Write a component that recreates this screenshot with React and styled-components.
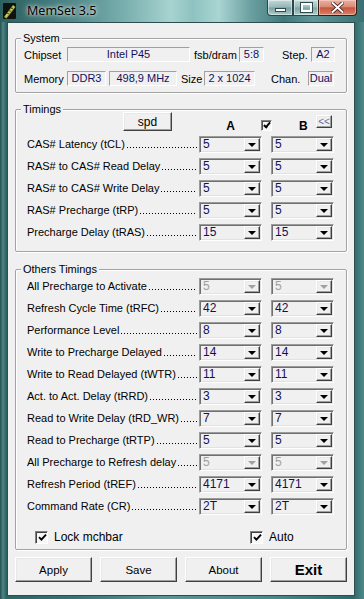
import React from "react";
import styled, { createGlobalStyle } from "styled-components";

const GlobalStyle = createGlobalStyle`
  html, body {
    margin: 0;
    padding: 0;
  }
  body {
    background: #2d6566;
    font-family: "Liberation Sans", Arial, sans-serif;
    font-size: 11px;
    color: #000;
  }
`;

const timings = [
  ["CAS# Latency (tCL)", "5", "5"],
  ["RAS# to CAS# Read Delay", "5", "5"],
  ["RAS# to CAS# Write Delay", "5", "5"],
  ["RAS# Precharge (tRP)", "5", "5"],
  ["Precharge Delay  (tRAS)", "15", "15"],
];

const others = [
  ["All Precharge to Activate", "5", "5", true],
  ["Refresh Cycle Time (tRFC)", "42", "42"],
  ["Performance Level", "8", "8"],
  ["Write to Precharge Delayed", "14", "14"],
  ["Write to Read Delayed (tWTR)", "11", "11"],
  ["Act. to Act. Delay (tRRD)", "3", "3"],
  ["Read to Write Delay (tRD_WR)", "7", "7"],
  ["Read to Precharge (tRTP)", "5", "5"],
  ["All Precharge to Refresh delay", "5", "5", true],
  ["Refresh Period (tREF)", "4171", "4171"],
  ["Command Rate (CR)", "2T", "2T"],
];

function MemSet() {
  return (
    <Window>
      <GlobalStyle />
      <TitleBar>
        <AppIcon width="13" height="16" viewBox="0 0 13 16">
          <rect x="0" y="0" width="13" height="16" rx="1" fill="#111" />
          <path d="M1 14 L10 2 L12.5 4 L3.5 15.5 Z" fill="#9fae3a" />
          <path d="M2.2 13.2 L10.3 3 L11.2 3.8 L3.1 14 Z" fill="#d8dc6a" />
          <circle cx="5" cy="10.5" r="0.8" fill="#2d3a10" />
          <circle cx="7" cy="8" r="0.8" fill="#2d3a10" />
          <circle cx="9" cy="5.4" r="0.8" fill="#2d3a10" />
        </AppIcon>
        <Title>MemSet 3.5</Title>
        <Caption>
          <CapBtn $w={26}>
            <MinGlyph />
          </CapBtn>
          <CapBtn $w={25} $last>
            <MaxGlyph />
          </CapBtn>
          <CloseBtn>
            <svg width="13" height="11" viewBox="0 0 13 11">
              <path
                d="M1.5 1 L11.5 10 M11.5 1 L1.5 10"
                stroke="#3a1a14"
                strokeWidth="3.6"
                strokeLinecap="square"
              />
              <path
                d="M1.5 1 L11.5 10 M11.5 1 L1.5 10"
                stroke="#fff"
                strokeWidth="2"
                strokeLinecap="square"
              />
            </svg>
          </CloseBtn>
        </Caption>
      </TitleBar>

      <Client>
        <Group $mt={15} $pb={6}>
          <Legend>System</Legend>
          <InfoRow $mt={2}>
            <InfoLabel $w={43}>Chipset</InfoLabel>
            <Field $w={123}>Intel P45</Field>
            <InfoLabel $ml={4} $w={45}>fsb/dram</InfoLabel>
            <Field $w={25}>5:8</Field>
            <InfoLabel $ml={18} $w={29}>Step.</InfoLabel>
            <Field $w={24}>A2</Field>
          </InfoRow>
          <InfoRow $mt={9}>
            <InfoLabel $w={43}>Memory</InfoLabel>
            <Field $w={39}>DDR3</Field>
            <Field $ml={3} $w={68}>498,9 MHz</Field>
            <InfoLabel $ml={4} $w={23}>Size</InfoLabel>
            <Field $w={51}>2 x 1024</Field>
            <InfoLabel $ml={16} $w={37}>Chan.</InfoLabel>
            <Field $w={26}>Dual</Field>
          </InfoRow>
        </Group>

        <Group $mt={16} $pb={8}>
          <Legend>Timings</Legend>
          <HeadRow>
            <SpdButton>spd</SpdButton>
            <ColHead>A</ColHead>
            <SmallCheck />
            <ColHead $w={44} $pl={27}>B</ColHead>
            <BackButton>&lt;&lt;</BackButton>
          </HeadRow>
          {timings.map(([name, a, b]) => (
            <TimingRow key={name} name={name} a={a} b={b} />
          ))}
        </Group>

        <Group $mt={17} $pb={2}>
          <Legend>Others Timings</Legend>
          <Rows $mt={-1}>
            {others.map(([name, a, b, off]) => (
              <TimingRow key={name} name={name} a={a} b={b} disabled={off} />
            ))}
          </Rows>
          <CheckRow>
            <CheckItem $w={215}>
              <CheckBox>
                <Tick />
              </CheckBox>
              Lock mchbar
            </CheckItem>
            <CheckItem>
              <CheckBox>
                <Tick />
              </CheckBox>
              Auto
            </CheckItem>
          </CheckRow>
        </Group>

        <ButtonBar>
          <PushButton>Apply</PushButton>
          <PushButton>Save</PushButton>
          <PushButton>About</PushButton>
          <PushButton $bold>Exit</PushButton>
        </ButtonBar>
      </Client>
    </Window>
  );
}

function TimingRow({ name, a, b, disabled }) {
  return (
    <Row>
      <RowLabel>
        <span>{name}</span>
        <Leader />
      </RowLabel>
      <Combo value={a} disabled={disabled} />
      <Combo value={b} disabled={disabled} $ml={9} />
    </Row>
  );
}

function Combo({ value, disabled, $ml }) {
  return (
    <ComboBox $ml={$ml}>
      <ComboValue $disabled={disabled}>{value}</ComboValue>
      <DropButton>
        <Arrow $disabled={disabled} />
      </DropButton>
    </ComboBox>
  );
}

function Tick({ size = 9 }) {
  return (
    <svg width={size} height={size} viewBox="0 0 9 9">
      <path
        d="M1 4.2 L3.4 6.6 L8 1.6"
        fill="none"
        stroke="#000"
        strokeWidth="1.9"
      />
    </svg>
  );
}

const Window = styled.div`
  width: 364px;
  height: 599px;
  display: flex;
  flex-direction: column;
  overflow: hidden;
  background: linear-gradient(
    90deg,
    #234f50 0px,
    #4f8485 3px,
    #2e6465 6px,
    #3a7172 20%,
    #5d9494 45%,
    #4f8889 75%,
    #2f6869 97%,
    #4e8889 100%
  );
`;

const TitleBar = styled.div`
  height: 22px;
  flex: none;
  display: flex;
  align-items: flex-start;
  background: linear-gradient(
    90deg,
    #2c5f60 0%,
    #3f7677 12%,
    #5c9394 24%,
    #7fb4b3 36%,
    #a7d3d0 47%,
    #8ec2c0 53%,
    #a9d5d2 60%,
    #6a9f9f 69%,
    #41797a 78%,
    #5e9596 86%,
    #3a7071 100%
  );
`;

const AppIcon = styled.svg`
  margin: 3px 0 0 3px;
  flex: none;
`;

const Title = styled.div`
  margin: 3px 0 0 11px;
  font-family: "Noto Sans", "Liberation Sans", sans-serif;
  font-size: 12.5px;
  line-height: 16px;
  color: #000;
  text-shadow: 0 0 6px rgba(255, 255, 255, 0.9), 0 0 3px rgba(255, 255, 255, 0.8);
`;

const Caption = styled.div`
  margin-left: auto;
  margin-right: 7px;
  display: flex;
  height: 16px;
`;

const CapBtn = styled.div`
  width: ${(p) => p.$w}px;
  height: 16px;
  box-sizing: border-box;
  display: flex;
  align-items: center;
  justify-content: center;
  border: 1px solid #2d4646;
  border-top: none;
  border-right: ${(p) => (p.$last ? "none" : "1px solid #2d4646")};
  border-radius: ${(p) => (p.$last ? "0" : "0 0 0 4px")};
  background: linear-gradient(
    180deg,
    rgba(235, 245, 245, 0.75) 0%,
    rgba(200, 220, 220, 0.6) 48%,
    rgba(150, 180, 180, 0.6) 52%,
    rgba(200, 230, 230, 0.75) 100%
  );
  box-shadow: inset 0 0 0 1px rgba(255, 255, 255, 0.45);
`;

const MinGlyph = styled.div`
  width: 9px;
  height: 2px;
  margin-top: 5px;
  background: #fff;
  border: 1px solid #2e4a4a;
`;

const MaxGlyph = styled.div`
  width: 7px;
  height: 5px;
  border: 2px solid #fff;
  outline: 1px solid #2e4a4a;
`;

const CloseBtn = styled.div`
  width: 39px;
  height: 16px;
  box-sizing: border-box;
  display: flex;
  align-items: center;
  justify-content: center;
  border: 1px solid #3a1c16;
  border-top: none;
  border-radius: 0 0 4px 0;
  background: linear-gradient(
    180deg,
    #eab2a2 0%,
    #d98b77 45%,
    #c8553c 52%,
    #d9826a 100%
  );
  box-shadow: inset 0 0 0 1px rgba(255, 220, 210, 0.5);
`;

const Client = styled.div`
  flex: 1;
  margin: 0 9px 3px 7px;
  border: 1px solid #2f4d4e;
  background: #f0f0f0;
  padding: 0 7px;
  display: flex;
  flex-direction: column;
`;

const Group = styled.div`
  margin-top: ${(p) => p.$mt}px;
  padding-bottom: ${(p) => p.$pb}px;
  border: 1px solid #a3a3a3;
  border-radius: 2px;
  box-shadow: inset 1px 1px 0 #fff, 1px 1px 0 #fff;
  display: flex;
  flex-direction: column;
`;

const Legend = styled.div`
  align-self: flex-start;
  margin: -8px 0 0 5px;
  padding: 0 2px;
  height: 14px;
  line-height: 14px;
  background: #f0f0f0;
`;

const InfoRow = styled.div`
  display: flex;
  align-items: center;
  height: 15px;
  margin-top: ${(p) => p.$mt}px;
  padding-left: 8px;
`;

const InfoLabel = styled.div`
  width: ${(p) => p.$w}px;
  margin-left: ${(p) => p.$ml || 0}px;
  white-space: nowrap;
`;

const Field = styled.div`
  width: ${(p) => p.$w}px;
  margin-left: ${(p) => p.$ml || 0}px;
  height: 15px;
  box-sizing: border-box;
  border: 1px solid;
  border-color: #a0a0a0 #ffffff #ffffff #a0a0a0;
  text-align: center;
  line-height: 13px;
  color: #101060;
  white-space: nowrap;
`;

const HeadRow = styled.div`
  display: flex;
  align-items: flex-start;
  height: 21px;
  margin-top: -4px;
  padding-left: 107px;
`;

const RaisedButton = styled.div`
  box-sizing: border-box;
  background: #f0f0f0;
  border: 1px solid;
  border-color: #ffffff #404040 #404040 #ffffff;
  box-shadow: inset -1px -1px 0 #a0a0a0, inset 1px 1px 0 #e8e8e8;
  display: flex;
  align-items: center;
  justify-content: center;
`;

const SpdButton = styled(RaisedButton)`
  width: 49px;
  height: 19px;
  font-size: 12px;
`;

const ColHead = styled.div`
  width: ${(p) => p.$w || 63}px;
  padding-left: ${(p) => p.$pl || 0}px;
  margin-left: ${(p) => (p.$pl ? 0 : 27)}px;
  box-sizing: border-box;
  margin-top: 8px;
  font-weight: bold;
  font-size: 12px;
  line-height: 13px;
  text-align: ${(p) => (p.$pl ? "left" : "center")};
`;

const SmallCheck = styled.div`
  width: 11px;
  height: 11px;
  margin-top: 8px;
  margin-left: -1px;
  box-sizing: border-box;
  border: 1px solid;
  border-color: #808080 #ffffff #ffffff #808080;
  box-shadow: inset 1px 1px 0 #505050;
  background: #f6f6f6;
  display: flex;
  align-items: center;
  justify-content: center;
  &::after {
    content: "";
    width: 2px;
    height: 5px;
    margin: -2px 0 0 1px;
    border: solid #000;
    border-width: 0 2px 2px 0;
    transform: rotate(40deg);
  }
`;

const BackButton = styled(RaisedButton)`
  width: 16px;
  height: 13px;
  margin-top: 3px;
  font-size: 10px;
  line-height: 10px;
  color: #5d6b9c;
`;

const Rows = styled.div`
  margin-top: ${(p) => p.$mt}px;
  display: flex;
  flex-direction: column;
`;

const Row = styled.div`
  display: flex;
  align-items: center;
  height: 22px;
  padding-left: 11px;
`;

const RowLabel = styled.div`
  width: 170px;
  margin-right: 2px;
  display: flex;
  align-items: flex-end;
  white-space: nowrap;
  line-height: 13px;
`;

const Leader = styled.div`
  flex: 1;
  height: 1px;
  margin: 0 0 3px 2px;
  background-image: linear-gradient(90deg, #000 0 1px, transparent 1px);
  background-size: 3px 1px;
`;

const ComboBox = styled.div`
  width: 63px;
  height: 17px;
  margin-left: ${(p) => p.$ml || 0}px;
  box-sizing: border-box;
  display: flex;
  border: 1px solid;
  border-color: #9a9a9a #ffffff #ffffff #9a9a9a;
  box-shadow: inset 1px 1px 0 #707070, inset -1px -1px 0 #e2e2e2;
  padding: 1px;
  background: #f0f0f0;
`;

const ComboValue = styled.div`
  flex: 1;
  padding-left: 2px;
  font-size: 12px;
  line-height: 13px;
  color: ${(p) => (p.$disabled ? "#a0a0a0" : "#10105a")};
`;

const DropButton = styled(RaisedButton)`
  width: 16px;
  height: 13px;
`;

const Arrow = styled.div`
  width: 0;
  height: 0;
  margin-top: 2px;
  border-left: 4px solid transparent;
  border-right: 4px solid transparent;
  border-top: 4px solid ${(p) => (p.$disabled ? "#a0a0a0" : "#000")};
`;

const CheckRow = styled.div`
  display: flex;
  align-items: center;
  height: 20px;
  margin-top: 10px;
  padding-left: 19px;
`;

const CheckItem = styled.div`
  display: flex;
  align-items: center;
  gap: 6px;
  width: ${(p) => (p.$w ? `${p.$w}px` : "auto")};
  font-size: 12px;
`;

const CheckBox = styled.div`
  width: 13px;
  height: 13px;
  box-sizing: border-box;
  border: 1px solid;
  border-color: #808080 #ffffff #ffffff #808080;
  box-shadow: inset 1px 1px 0 #404040;
  background: #f6f6f6;
  display: flex;
  align-items: center;
  justify-content: center;
  padding: 1px 0 0 1px;
`;

const ButtonBar = styled.div`
  display: flex;
  gap: 8px;
  margin-top: 7px;
`;

const PushButton = styled(RaisedButton)`
  flex: 1;
  height: 25px;
  font-size: ${(p) => (p.$bold ? 15 : 11.5)}px;
  font-weight: ${(p) => (p.$bold ? "bold" : "normal")};
`;

export default function App() {
  return <MemSet />;
}
